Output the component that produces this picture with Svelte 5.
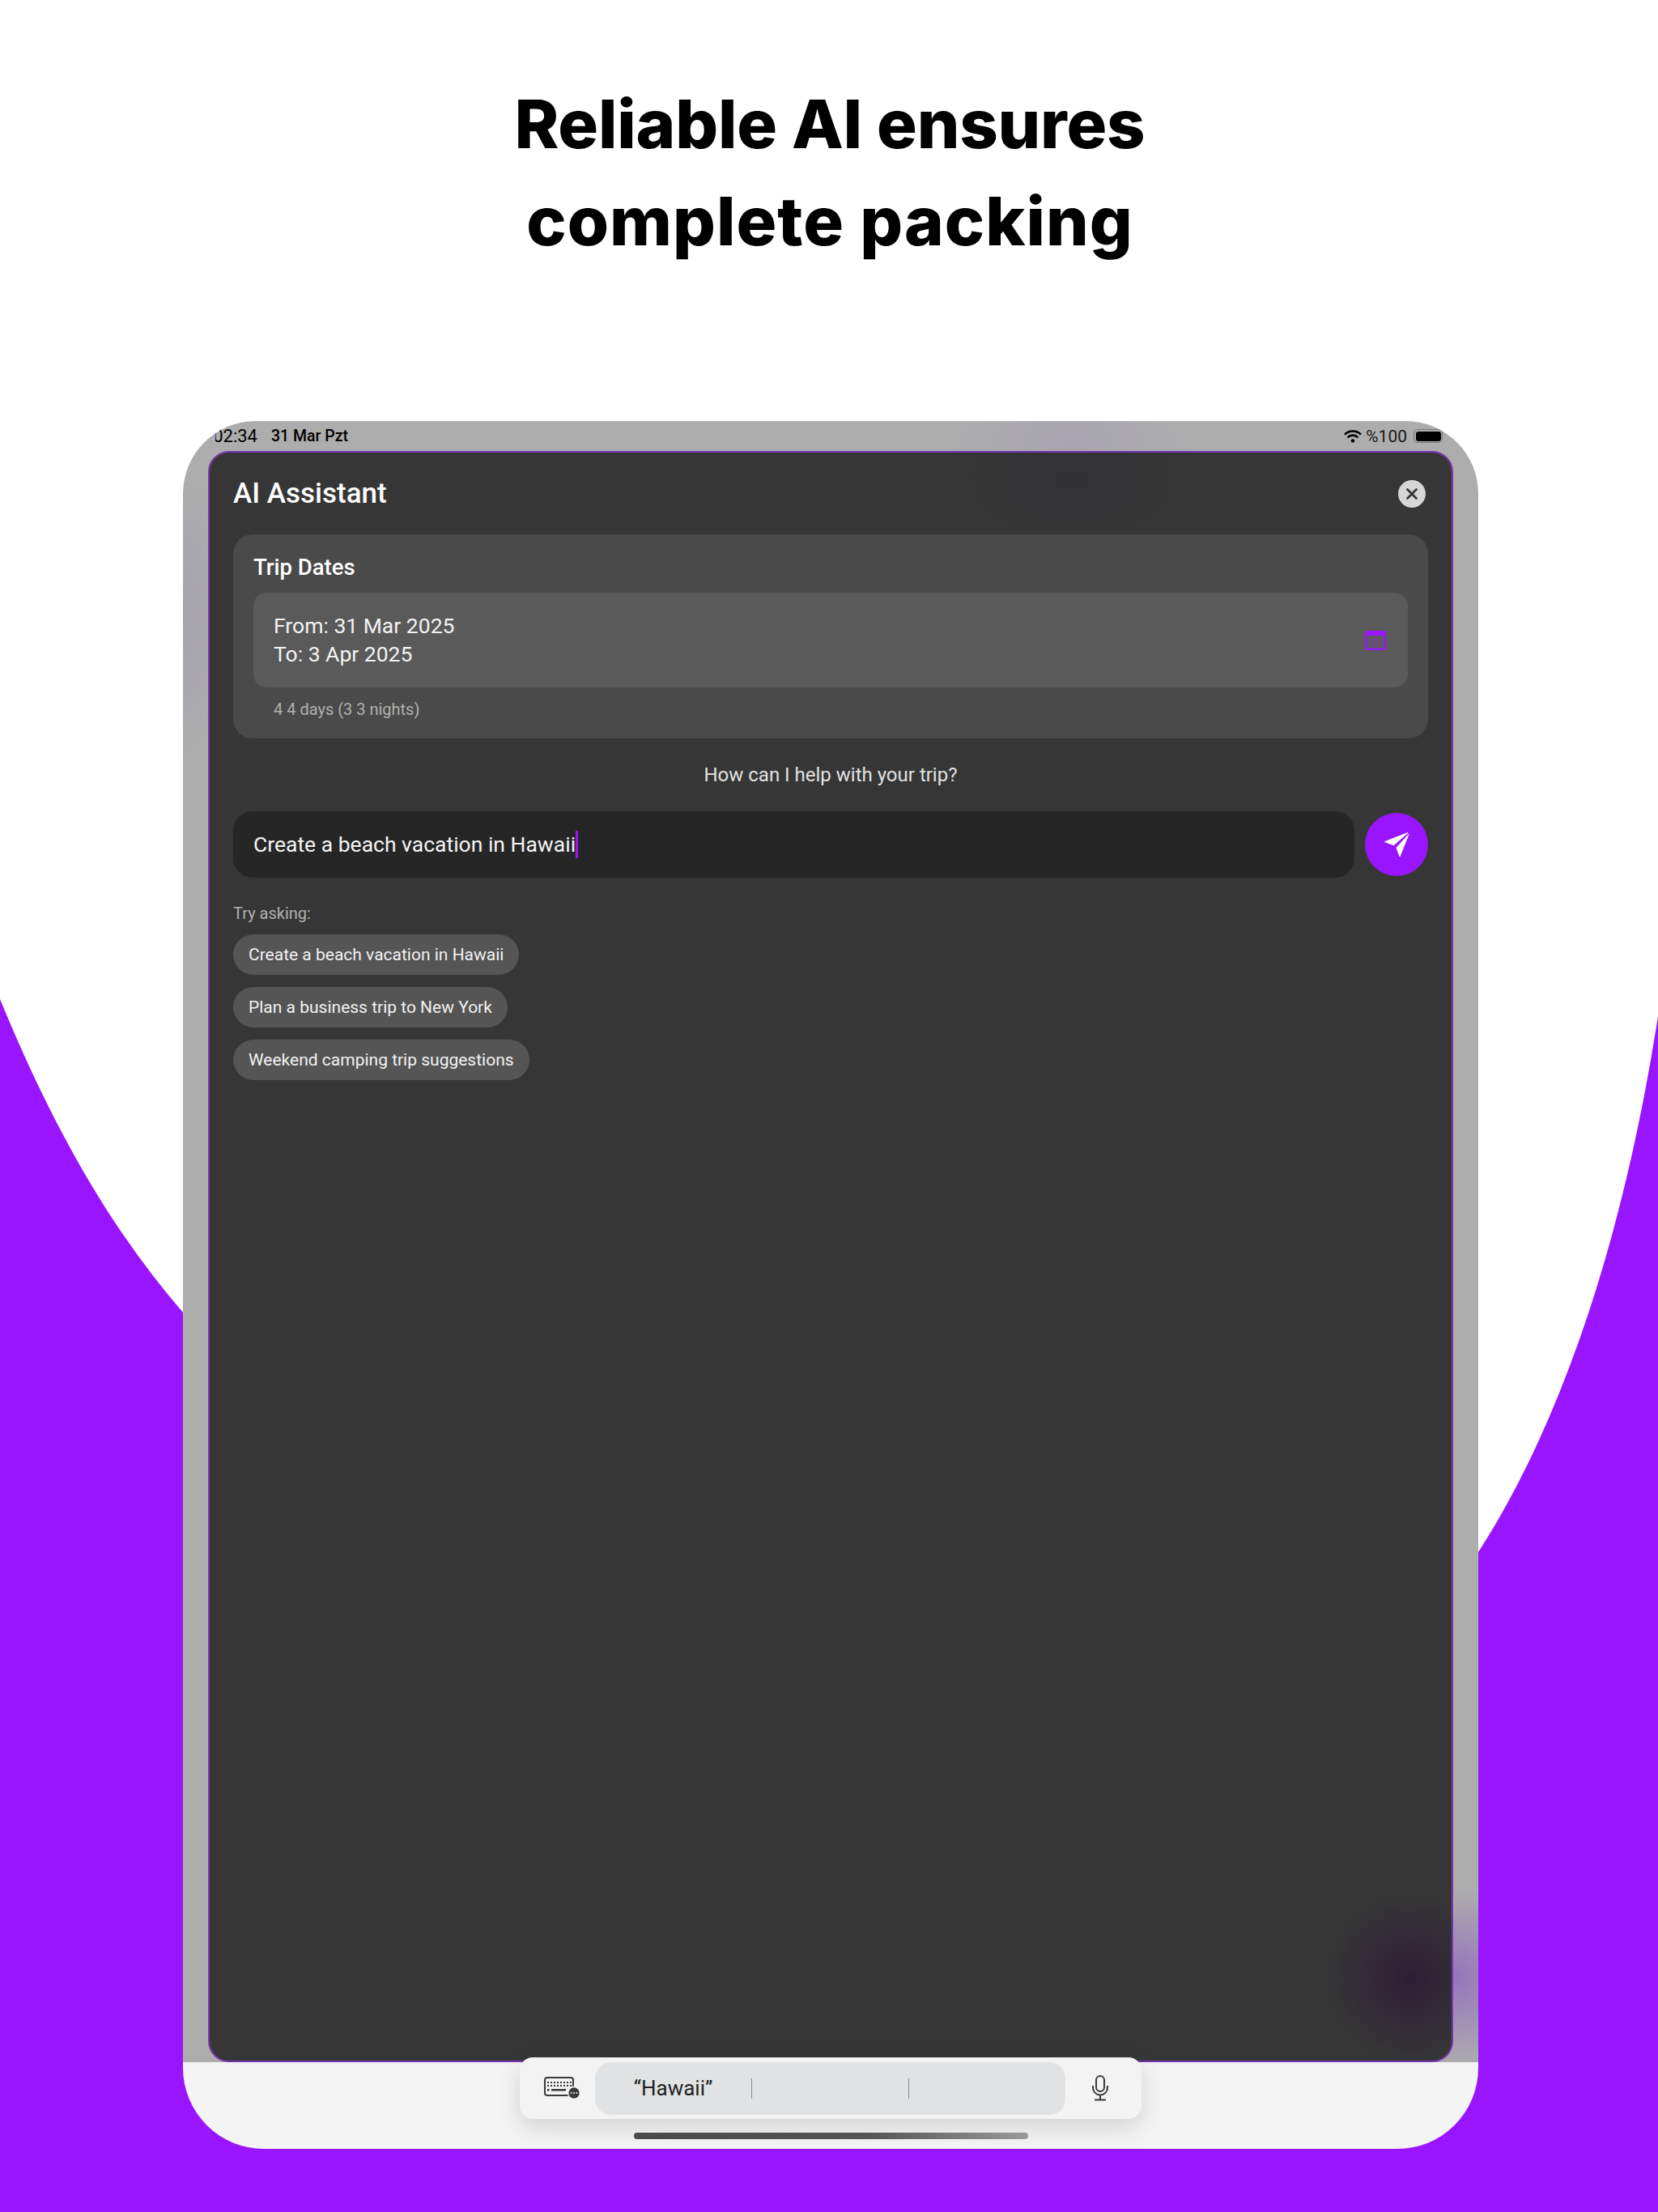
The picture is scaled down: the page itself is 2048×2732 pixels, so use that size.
<script lang="ts">
	const suggestions = [
		'Create a beach vacation in Hawaii',
		'Plan a business trip to New York',
		'Weekend camping trip suggestions'
	];
</script>

<div class="page">
	<svg class="backdrop" viewBox="0 0 2048 2732" aria-hidden="true">
		<path
			fill="#9a15ff"
			d="M0 1234 C60 1380 130 1510 226 1621 L226 2000 L1826 2000 L1826 1917 C1940 1740 2010 1500 2048 1255 L2048 2732 L0 2732 Z"
		/>
	</svg>

	<header class="headline">
		<h1>Reliable AI ensures<span class="line-two">complete packing</span></h1>
	</header>

	<div class="device">
		<div class="screen">
			<div class="statusbar">
				<div class="status-left">
					<span class="clock"><span>02:34</span></span>
					<span class="date">31 Mar Pzt</span>
				</div>
				<div class="status-right">
					<svg class="wifi" viewBox="0 0 22 16" aria-hidden="true">
						<path d="M1 5.6a14.4 14.4 0 0 1 20 0" />
						<path d="M4.6 9.2a9.3 9.3 0 0 1 12.8 0" />
						<circle cx="11" cy="13.4" r="2.2" />
					</svg>
					<span>%100</span>
					<span class="battery"><span></span></span>
				</div>
			</div>

			<section class="modal">
				<div class="modal-head">
					<h2>AI Assistant</h2>
					<button class="close" aria-label="Close">
						<svg viewBox="0 0 14 14" aria-hidden="true"><path d="M1.5 1.5l11 11M12.5 1.5l-11 11" /></svg>
					</button>
				</div>

				<div class="trip-card">
					<h3>Trip Dates</h3>
					<div class="date-box">
						<div class="date-lines">
							<div>From: 31 Mar 2025</div>
							<div>To: 3 Apr 2025</div>
						</div>
						<svg class="calendar" viewBox="0 0 26 24" aria-hidden="true">
							<rect class="cal-frame" x="1.2" y="1.2" width="23.6" height="21.6" rx="2" />
							<rect class="cal-band" x="1" y="1" width="24" height="5" />
							<g class="cal-dots">
								{#each [10, 14, 18] as cy}
									{#each [6, 9.5, 13, 16.5, 20] as cx}
										<rect x={cx - 0.8} y={cy - 0.8} width="1.6" height="1.6" />
									{/each}
								{/each}
							</g>
						</svg>
					</div>
					<div class="duration">4 4 days (3 3 nights)</div>
				</div>

				<p class="prompt">How can I help with your trip?</p>

				<div class="ask-row">
					<div class="ask-input">Create a beach vacation in Hawaii<span class="caret"></span></div>
					<button class="send" aria-label="Send">
						<svg viewBox="0 0 32 33" aria-hidden="true">
							<path d="M30 1.5L1.5 12.6 12.5 16.8Z" />
							<path d="M31 3.5L16 20 20 31Z" />
						</svg>
					</button>
				</div>

				<div class="try-label">Try asking:</div>
				<div class="chips">
					{#each suggestions as text}
						<button class="chip">{text}</button>
					{/each}
				</div>
			</section>
		</div>

		<div class="bottom">
			<div class="kb-bar">
				<svg class="kb-icon" viewBox="0 0 45 28" aria-hidden="true">
					<rect class="kb-frame" x="1" y="1" width="35" height="22" rx="3" />
					{#each [6, 10] as y}
						{#each [5, 9, 13, 17, 21, 25, 29, 33] as x}
							<rect x={x - 1} {y} width="2" height="2" />
						{/each}
					{/each}
					<rect x="4" y="15" width="2.5" height="2.5" />
					<rect x="9" y="15" width="18" height="2.5" />
					<circle cx="37" cy="20" r="7.4" stroke="#f3f3f3" stroke-width="1.5" />
					<circle class="kb-dot" cx="33.6" cy="20" r="1" />
					<circle class="kb-dot" cx="37" cy="20" r="1" />
					<circle class="kb-dot" cx="40.4" cy="20" r="1" />
				</svg>

				<div class="candidates">
					<div class="candidate">“Hawaii”</div>
					<div class="candidate"></div>
					<div class="candidate"></div>
				</div>

				<svg class="mic" viewBox="0 0 22 32" aria-hidden="true">
					<rect x="6" y="1" width="10" height="19" rx="5" />
					<path d="M2 13v2.5a9 9 0 0 0 18 0V13M11 24.5V30M4 30.5h14" />
				</svg>
			</div>
			<div class="home-bar"></div>
		</div>
	</div>
</div>

<style>
	:global(body) {
		margin: 0;
		background: #fff;
	}

	.page {
		position: relative;
		width: 2048px;
		height: 2732px;
		overflow: hidden;
		font-family: Roboto, 'Liberation Sans', sans-serif;
		background: #fff;
	}

	.backdrop {
		position: absolute;
		inset: 0;
		width: 2048px;
		height: 2732px;
	}

	.headline {
		position: relative;
		height: 520px;
		box-sizing: border-box;
		padding-top: 93px;
		padding-left: 2px;
		text-align: center;
		font-family: Inter, sans-serif;
	}

	h1 {
		margin: 0;
		font-size: 83px;
		line-height: 120px;
		font-weight: 800;
		letter-spacing: -0.2px;
		color: #000;
	}

	.line-two {
		display: block;
		letter-spacing: 1px;
	}

	.device {
		position: relative;
		width: 1600px;
		height: 2134px;
		margin-left: 226px;
		border-radius: 90px 90px 100px 100px;
		overflow: hidden;
		display: flex;
		flex-direction: column;
		background: #f4f4f4;
	}

	.screen {
		height: 2027px;
		display: flex;
		flex-direction: column;
		background:
			radial-gradient(circle at 1572px 1922px, rgba(130, 70, 200, 0.55) 0, rgba(130, 70, 200, 0) 110px),
			radial-gradient(ellipse 160px 100px at 1095px 30px, rgba(150, 130, 190, 0.18) 0, rgba(150, 130, 190, 0) 100%),
			radial-gradient(ellipse 60px 180px at 0 240px, rgba(140, 120, 180, 0.2) 0, rgba(140, 120, 180, 0) 100%),
			#adadad;
	}

	.statusbar {
		height: 37px;
		flex: none;
		display: flex;
		justify-content: space-between;
		align-items: center;
		padding: 0 44px 0 40px;
		font-size: 19.5px;
		font-weight: 500;
		color: #000;
	}

	.status-left {
		display: flex;
		align-items: center;
		gap: 17px;
	}

	.clock {
		width: 52px;
		font-size: 22px;
		font-weight: 400;
		display: flex;
		justify-content: flex-end;
		overflow: hidden;
		white-space: nowrap;
	}

	.status-right {
		display: flex;
		align-items: center;
		gap: 8px;
		font-weight: 400;
		font-size: 21px;
		color: #1a1a1a;
	}

	.wifi {
		width: 22px;
		height: 16px;
		margin-right: -3px;
	}

	.wifi path {
		fill: none;
		stroke: #000;
		stroke-width: 2.6;
	}

	.battery {
		width: 36px;
		height: 17px;
		box-sizing: border-box;
		border: 1.5px solid #777;
		border-radius: 5px;
		padding: 1.5px;
		display: flex;
	}

	.battery span {
		flex: 1;
		background: #000;
		border-radius: 3px;
	}

	.modal {
		flex: 1;
		margin: 0 31px;
		box-sizing: border-box;
		border: 2px solid #7a35b0;
		border-radius: 26px;
		padding: 0 29px;
		color: #fff;
		background:
			radial-gradient(circle at 1484px 1884px, #2e1e36 0, rgba(46, 30, 54, 0.65) 35px, rgba(54, 54, 54, 0) 105px),
			radial-gradient(ellipse 130px 80px at 1065px 33px, #323136 0, rgba(50, 49, 54, 0) 100%),
			#363636;
	}

	.modal-head {
		height: 101px;
		display: flex;
		justify-content: space-between;
		align-items: center;
	}

	h2 {
		margin: 0;
		font-size: 35px;
		font-weight: 500;
	}

	.close {
		width: 34px;
		height: 34px;
		padding: 0;
		margin-right: 3px;
		border: none;
		border-radius: 50%;
		background: #d6d6d6;
		display: flex;
		align-items: center;
		justify-content: center;
	}

	.close svg {
		width: 14px;
		height: 14px;
		fill: none;
		stroke: #333;
		stroke-width: 2.6;
		stroke-linecap: round;
	}

	.trip-card {
		height: 252px;
		box-sizing: border-box;
		padding: 24px 25px 0;
		background: #4a4a4a;
		border-radius: 24px;
	}

	h3 {
		margin: 0 0 14px;
		font-size: 27.5px;
		line-height: 34px;
		font-weight: 500;
	}

	.date-box {
		height: 117px;
		box-sizing: border-box;
		padding: 0 27px 0 25px;
		display: flex;
		justify-content: space-between;
		align-items: center;
		background: #5a5a5a;
		border-radius: 16px;
	}

	.date-lines {
		margin-bottom: 2px;
		font-size: 26.5px;
		line-height: 35px;
		color: #f4f4f4;
	}

	.calendar {
		width: 26px;
		height: 24px;
	}

	.cal-frame {
		fill: none;
		stroke: #9a15ff;
		stroke-width: 2.4;
	}

	.cal-band {
		fill: #9a15ff;
	}

	.cal-dots {
		fill: #8f2bdc;
	}

	.duration {
		margin: 15px 0 0 25px;
		font-size: 20px;
		line-height: 24px;
		color: #b0b0b0;
	}

	.prompt {
		margin: 0;
		height: 90px;
		box-sizing: border-box;
		padding-top: 30px;
		font-size: 24px;
		line-height: 30px;
		text-align: center;
		color: #e2e2e2;
	}

	.ask-row {
		display: flex;
		align-items: center;
		gap: 13px;
	}

	.ask-input {
		flex: 1;
		height: 82px;
		box-sizing: border-box;
		padding: 0 0 1px 25px;
		display: flex;
		align-items: center;
		background: #262626;
		border-radius: 24px;
		font-size: 26.5px;
		color: #f4f4f4;
	}

	.caret {
		width: 3px;
		height: 34px;
		background: #9a15ff;
	}

	.send {
		width: 78px;
		height: 78px;
		padding: 0;
		border: none;
		border-radius: 50%;
		background: #9a15ff;
		display: flex;
		align-items: center;
		justify-content: center;
	}

	.send svg {
		width: 32px;
		height: 33px;
		fill: #fff;
		stroke: #fff;
		stroke-width: 1;
		stroke-linejoin: round;
	}

	.try-label {
		margin-top: 32px;
		font-size: 20px;
		line-height: 24px;
		color: #b0b0b0;
	}

	.chips {
		margin-top: 14px;
		display: flex;
		flex-direction: column;
		align-items: flex-start;
		gap: 15px;
	}

	.chip {
		height: 50px;
		padding: 0 19px;
		border: none;
		border-radius: 25px;
		background: #555;
		color: #f2f2f2;
		font-family: inherit;
		font-size: 21px;
	}

	.bottom {
		flex: 1;
		position: relative;
		display: flex;
		flex-direction: column;
		align-items: center;
	}

	.kb-bar {
		width: 768px;
		height: 76px;
		margin-top: -6px;
		flex: none;
		box-sizing: border-box;
		padding: 0 40px 0 30px;
		display: flex;
		align-items: center;
		background: #f3f3f3;
		border-radius: 16px;
		box-shadow: 0 10px 30px rgba(0, 0, 0, 0.14);
	}

	.kb-icon {
		width: 45px;
		height: 28px;
		flex: none;
		fill: #3a3a3a;
	}

	.kb-frame {
		fill: none;
		stroke: #3a3a3a;
		stroke-width: 2;
	}

	.kb-dot {
		fill: #f3f3f3;
	}

	.candidates {
		width: 581px;
		height: 65px;
		margin-left: 18px;
		flex: none;
		display: grid;
		grid-template-columns: 193px 194px 194px;
		align-items: center;
		background: #e1e2e3;
		border-radius: 20px;
	}

	.candidate {
		height: 25px;
		display: flex;
		align-items: center;
		justify-content: center;
		font-size: 26px;
		color: #222;
	}

	.candidate + .candidate {
		border-left: 1px solid #8a8a8a;
	}

	.mic {
		width: 22px;
		height: 32px;
		margin-left: 32px;
		flex: none;
		fill: none;
		stroke: #3a3a3a;
		stroke-width: 2;
	}

	.home-bar {
		width: 487px;
		height: 8px;
		margin-top: 17px;
		border-radius: 4px;
		background: linear-gradient(90deg, #4a4a4a 0, #555 60%, #9a9a9a 100%);
	}
</style>
